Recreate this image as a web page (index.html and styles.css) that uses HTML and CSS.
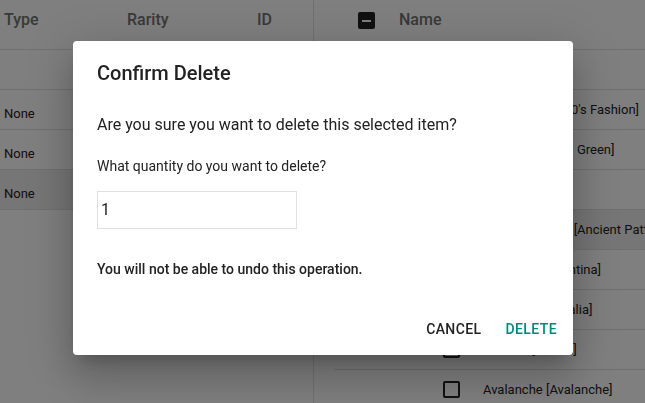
FILE: index.html
```html
<!DOCTYPE html>
<html>
<head>
<meta charset="utf-8">
<link rel="stylesheet" href="styles.css">
</head>
<body>
<div class="page">
  <div class="left">
    <div class="head lhead">
      <span class="c1">Type</span><span class="c2">Rarity</span><span class="c3">ID</span>
    </div>
    <div class="lrow"></div>
    <div class="lrow"><span class="c1">None</span></div>
    <div class="lrow"><span class="c1">None</span></div>
    <div class="lrow hl"><span class="c1">None</span></div>
    <div class="lrow empty"></div>
  </div>
  <div class="right">
    <div class="head rhead">
      <span class="mbox"><span class="minus"></span></span><span>Name</span>
    </div>
    <div class="rrow"><span class="cbox"></span><span class="name">Basic [Basic]</span></div>
    <div class="rrow"><span class="cbox"></span><span class="name">Disco Fevers [70's Fashion]</span></div>
    <div class="rrow"><span class="cbox"></span><span class="name">Forest [Emerald Green]</span></div>
    <div class="rrow"><span class="cbox"></span><span class="name">Amber [Amber]</span></div>
    <div class="rrow hl"><span class="cbox"></span><span class="name">Temple Guards [Ancient Pattern]</span></div>
    <div class="rrow"><span class="cbox"></span><span class="name">Gaucho's [Argentina]</span></div>
    <div class="rrow"><span class="cbox"></span><span class="name">Outback [Australia]</span></div>
    <div class="rrow"><span class="cbox"></span><span class="name">Auroras [Aurora]</span></div>
    <div class="rrow"><span class="cbox"></span><span class="name">Avalanche [Avalanche]</span></div>
  </div>
</div>
<div class="overlay"></div>
<div class="dialog">
  <h2 class="title">Confirm Delete</h2>
  <p class="question">Are you sure you want to delete this selected item?</p>
  <p class="label">What quantity do you want to delete?</p>
  <div class="input">1</div>
  <p class="warn">You will not be able to undo this operation.</p>
  <div class="actions">
    <span class="btn cancel">CANCEL</span>
    <span class="btn delete">DELETE</span>
  </div>
</div>
</body>
</html>
```
FILE: styles.css
```css
* { box-sizing: border-box; }
html, body {
  margin: 0;
  padding: 0;
  width: 645px;
  height: 403px;
  overflow: hidden;
  background: #ffffff;
  font-family: Roboto, "Liberation Sans", sans-serif;
  color: #222222;
}
.page {
  display: flex;
  height: 403px;
}
.left {
  width: 314px;
  border-right: 1px solid #e0e0e0;
  flex: none;
}
.right {
  flex: 1;
  min-width: 0;
}
.head {
  height: 50px;
  border-bottom: 1px solid #e0e0e0;
  display: flex;
  align-items: flex-start;
  padding-top: 10px;
  font-size: 16px;
  font-weight: 500;
  line-height: 20px;
  color: #737373;
}
.lhead, .lrow {
  padding-left: 4px;
}
.c1 { width: 123px; }
.c2 { width: 130px; }
.c3 { width: 40px; }
.lrow {
  height: 40px;
  border-bottom: 1px solid #e0e0e0;
  display: flex;
  align-items: center;
  padding-top: 8px;
  font-size: 13px;
  line-height: 20px;
}
.lrow.empty { border-bottom: none; }
.hl { background: #ececec; }
.rhead {
  padding-left: 44px;
  gap: 24px;
}
.mbox {
  width: 17px;
  height: 17px;
  margin-top: 2px;
  background: #222222;
  border-radius: 2px;
  display: flex;
  align-items: center;
  justify-content: center;
}
.minus {
  width: 9px;
  height: 2px;
  background: #ffffff;
}
.rrow {
  margin-left: 20px;
  height: 40px;
  border-bottom: 1px solid #e0e0e0;
  display: flex;
  align-items: center;
  padding-left: 109px;
  gap: 23px;
  font-size: 13px;
  white-space: nowrap;
  overflow: hidden;
}
.cbox {
  width: 17px;
  height: 17px;
  border: 2px solid #222222;
  border-radius: 2px;
  flex: none;
}
.name { flex: none; }
.overlay {
  position: fixed;
  inset: 0;
  background: rgba(0, 0, 0, 0.5);
}
.dialog {
  position: absolute;
  left: 73px;
  top: 41px;
  width: 500px;
  height: 314px;
  background: #ffffff;
  border-radius: 4px;
  padding: 20px 24px 0;
  box-shadow: 0 11px 15px -7px rgba(0,0,0,0.2), 0 24px 38px 3px rgba(0,0,0,0.14), 0 9px 46px 8px rgba(0,0,0,0.12);
  display: flex;
  flex-direction: column;
  color: #222222;
}
.title {
  margin: 0;
  font-size: 20px;
  font-weight: 500;
  line-height: 24px;
}
.question {
  margin: 28px 0 0;
  font-size: 16px;
  line-height: 24px;
}
.label {
  margin: 19px 0 0;
  font-size: 14px;
  line-height: 20px;
}
.input {
  margin-top: 15px;
  width: 200px;
  height: 38px;
  border: 1px solid #e0e0e0;
  padding-left: 3px;
  font-size: 16px;
  line-height: 36px;
}
.warn {
  margin: 30px 0 0;
  font-size: 14px;
  font-weight: 500;
  line-height: 20px;
}
.actions {
  margin-top: auto;
  margin-right: -16px;
  height: 52px;
  display: flex;
  justify-content: flex-end;
  align-items: center;
  gap: 8px;
}
.btn {
  padding: 6px 8px;
  font-size: 14px;
  font-weight: 500;
  letter-spacing: 0.4px;
  line-height: 24px;
}
.cancel { color: #222222; }
.delete { color: #00897b; }
```
